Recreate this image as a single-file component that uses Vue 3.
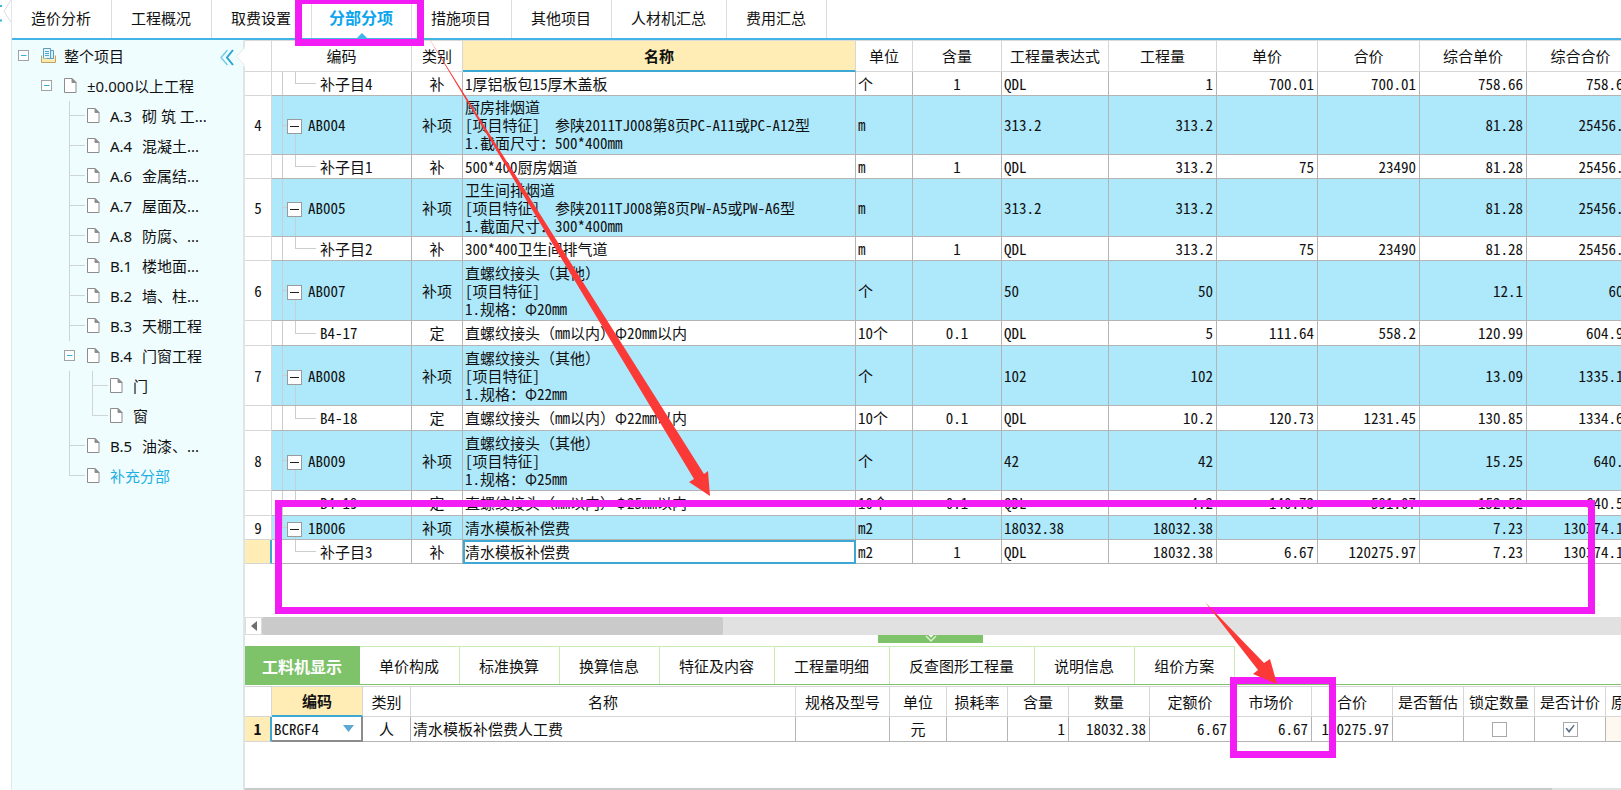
<script setup>
import { ref } from 'vue'

const tabs = ['造价分析', '工程概况', '取费设置', '分部分项', '措施项目', '其他项目', '人材机汇总', '费用汇总']
const activeTab = ref('分部分项')

const tree = [
  { guides: [], toggle: true, icon: 'root', name: '整个项目' },
  { guides: ['none'], toggle: true, icon: 'doc', name: '±0.000以上工程' },
  { guides: ['none', 'none', 'tee'], icon: 'doc', code: 'A.3', name: '砌 筑 工...' },
  { guides: ['none', 'none', 'tee'], icon: 'doc', code: 'A.4', name: '混凝土...' },
  { guides: ['none', 'none', 'tee'], icon: 'doc', code: 'A.6', name: '金属结...' },
  { guides: ['none', 'none', 'tee'], icon: 'doc', code: 'A.7', name: '屋面及...' },
  { guides: ['none', 'none', 'tee'], icon: 'doc', code: 'A.8', name: '防腐、...' },
  { guides: ['none', 'none', 'tee'], icon: 'doc', code: 'B.1', name: '楼地面...' },
  { guides: ['none', 'none', 'tee'], icon: 'doc', code: 'B.2', name: '墙、柱...' },
  { guides: ['none', 'none', 'tee'], icon: 'doc', code: 'B.3', name: '天棚工程' },
  { guides: ['none', 'none'], toggle: true, icon: 'doc', code: 'B.4', name: '门窗工程' },
  { guides: ['none', 'none', 'pipe', 'tee'], icon: 'doc', name: '门' },
  { guides: ['none', 'none', 'pipe', 'elbow'], icon: 'doc', name: '窗' },
  { guides: ['none', 'none', 'tee'], icon: 'doc', code: 'B.5', name: '油漆、...' },
  { guides: ['none', 'none', 'elbow'], icon: 'doc', name: '补充分部', active: true }
]
const guidePath = {
  none: '',
  pipe: 'M5.5 0V30',
  tee: 'M5.5 0V30M5.5 14.5H21',
  elbow: 'M5.5 0V15M5.5 14.5H21'
}

const columns = [
  { label: '编码', cls: 'w-code' },
  { label: '类别', cls: 'w-kind' },
  { label: '名称', cls: 'w-name' },
  { label: '单位', cls: 'w-unit' },
  { label: '含量', cls: 'w-content' },
  { label: '工程量表达式', cls: 'w-expr' },
  { label: '工程量', cls: 'w-qty' },
  { label: '单价', cls: 'w-price' },
  { label: '合价', cls: 'w-total' },
  { label: '综合单价', cls: 'w-expr' },
  { label: '综合合价', cls: 'w-qty' }
]

const rows = [
  { code: '补子目4', kind: '补', name: '1厚铝板包15厚木盖板', unit: '个', content: '1', expr: 'QDL', qty: '1', price: '700.01', total: '700.01', cPrice: '758.66', cTotal: '758.66' },
  { no: '4', code: 'AB004', kind: '补项', name: '厨房排烟道\n[项目特征]  参陕2011TJ008第8页PC-A11或PC-A12型\n1.截面尺寸：500*400mm', unit: 'm', expr: '313.2', qty: '313.2', cPrice: '81.28', cTotal: '25456.9', size: 'h59' },
  { code: '补子目1', kind: '补', name: '500*400厨房烟道', unit: 'm', content: '1', expr: 'QDL', qty: '313.2', price: '75', total: '23490', cPrice: '81.28', cTotal: '25456.9' },
  { no: '5', code: 'AB005', kind: '补项', name: '卫生间排烟道\n[项目特征]  参陕2011TJ008第8页PW-A5或PW-A6型\n1.截面尺寸：300*400mm', unit: 'm', expr: '313.2', qty: '313.2', cPrice: '81.28', cTotal: '25456.9', size: 'h58' },
  { code: '补子目2', kind: '补', name: '300*400卫生间排气道', unit: 'm', content: '1', expr: 'QDL', qty: '313.2', price: '75', total: '23490', cPrice: '81.28', cTotal: '25456.9' },
  { no: '6', code: 'AB007', kind: '补项', name: '直螺纹接头（其他）\n[项目特征]\n1.规格：Φ20mm', unit: '个', expr: '50', qty: '50', cPrice: '12.1', cTotal: '605', size: 'h60' },
  { code: 'B4-17', kind: '定', name: '直螺纹接头（mm以内）Φ20mm以内', unit: '10个', content: '0.1', expr: 'QDL', qty: '5', price: '111.64', total: '558.2', cPrice: '120.99', cTotal: '604.95', size: 'h25' },
  { no: '7', code: 'AB008', kind: '补项', name: '直螺纹接头（其他）\n[项目特征]\n1.规格：Φ22mm', unit: '个', expr: '102', qty: '102', cPrice: '13.09', cTotal: '1335.18', size: 'h60' },
  { code: 'B4-18', kind: '定', name: '直螺纹接头（mm以内）Φ22mm以内', unit: '10个', content: '0.1', expr: 'QDL', qty: '10.2', price: '120.73', total: '1231.45', cPrice: '130.85', cTotal: '1334.67', size: 'h25' },
  { no: '8', code: 'AB009', kind: '补项', name: '直螺纹接头（其他）\n[项目特征]\n1.规格：Φ25mm', unit: '个', expr: '42', qty: '42', cPrice: '15.25', cTotal: '640.5', size: 'h60' },
  { code: 'B4-19', kind: '定', name: '直螺纹接头（mm以内）Φ25mm以内', unit: '10个', content: '0.1', expr: 'QDL', qty: '4.2', price: '140.73', total: '591.07', cPrice: '152.52', cTotal: '640.58', size: 'h25' },
  { no: '9', code: '1B006', kind: '补项', name: '清水模板补偿费', unit: 'm2', expr: '18032.38', qty: '18032.38', cPrice: '7.23', cTotal: '130374.11', last: true },
  { code: '补子目3', kind: '补', name: '清水模板补偿费', unit: 'm2', content: '1', expr: 'QDL', qty: '18032.38', price: '6.67', total: '120275.97', cPrice: '7.23', cTotal: '130374.11', selected: true, last: true }
]

// Splits out the full-width brackets, which keep their full width among half-width digits.
const pieces = (text) => text.split(/([（）])/).filter(Boolean)

const detailTabs = ['工料机显示', '单价构成', '标准换算', '换算信息', '特征及内容', '工程量明细', '反查图形工程量', '说明信息', '组价方案']
const activeDetail = ref('工料机显示')

const detailColumns = [
  { label: '编码', cls: 'd-code' },
  { label: '类别', cls: 'd-kind' },
  { label: '名称', cls: 'd-name' },
  { label: '规格及型号', cls: 'd-spec' },
  { label: '单位', cls: 'd-unit' },
  { label: '损耗率', cls: 'd-loss' },
  { label: '含量', cls: 'd-loss' },
  { label: '数量', cls: 'd-num' },
  { label: '定额价', cls: 'd-num' },
  { label: '市场价', cls: 'd-num' },
  { label: '合价', cls: 'd-num' },
  { label: '是否暂估', cls: 'd-flag' },
  { label: '锁定数量', cls: 'd-flag' },
  { label: '是否计价', cls: 'd-flag' },
  { label: '原始含量', cls: 'd-flag' }
]
const locked = ref(false)
const priced = ref(true)
const itemCode = ref('BCRGF4')
</script>

<template>
  <div class="app">
    <div class="gutter">
      <svg width="11" height="40" viewBox="0 0 11 40" aria-hidden="true">
        <path d="M0 6H2M0 20.500H2" stroke="#35b4dc" stroke-width="2" />
        <path d="M11 0L4 11.500L11 22" fill="none" stroke="#dcdcdc" />
      </svg>
    </div>
    <div class="main">
      <nav class="tabs">
        <button v-for="t in tabs" :key="t" type="button" class="tab" :class="{ active: t === activeTab }" @click="activeTab = t">
          {{ t }}
        </button>
      </nav>

      <div class="workspace">
        <aside class="sidebar">
          <ul class="tree">
            <li v-for="(n, i) in tree" :key="i" class="node" :class="{ current: n.active }">
              <svg v-for="(g, k) in n.guides" :key="k" class="cell" width="23" height="30" viewBox="0 0 23 30" aria-hidden="true">
                <path :d="guidePath[g]" fill="none" stroke="#cfd4d5" />
              </svg>
              <button v-if="n.toggle" type="button" class="cell toggle" :aria-label="'折叠 ' + n.name">
                <svg width="12" height="12" viewBox="0 0 12 12">
                  <rect x="0.500" y="0.500" width="10" height="10" fill="#fbffff" stroke="#a3a3a3" />
                  <path d="M3 5.500H8.500" stroke="#3aaedb" />
                </svg>
              </button>
              <svg v-if="n.icon === 'doc'" class="cell" width="23" height="18" viewBox="0 0 23 18" aria-hidden="true">
                <path d="M0.500 1.500H8L12 5.500V15.500H0.500Z" fill="#fff" stroke="#8d8d8d" />
                <path d="M8 1.500V5.500H12Z" fill="#8d8d8d" stroke="#8d8d8d" />
              </svg>
              <svg v-else class="cell" width="23" height="18" viewBox="0 0 23 18" aria-hidden="true">
                <path d="M0.500 8.500V15.500H14.500V8.500" fill="#fdf1c4" stroke="#b9a46a" />
                <path d="M2.500 1.500H9.500V11.500H2.500Z" fill="#e9f7fd" stroke="#5b9cbd" />
                <path d="M9.500 3.500H12.500V11.500H9.500Z" fill="#d4edf8" stroke="#5b9cbd" />
                <path d="M4 4.500H8M4 6.500H8M4 8.500H8" stroke="#4aa7d2" />
                <path d="M1 11.500H5.500L7 13H14V15H1Z" fill="#fbe9ac" />
              </svg>
              <span v-if="n.code" class="node-code">{{ n.code }}</span>
              <span>{{ n.name }}</span>
            </li>
          </ul>
          <button type="button" class="collapse" aria-label="收起">
            <svg width="26" height="22" viewBox="0 0 26 22">
              <path d="M8.500 3L2 10.500L8.500 18" fill="none" stroke="#6cc8e6" stroke-width="1.300" />
              <path d="M14 3L8 10.500L14 18" fill="none" stroke="#2ba5cf" stroke-width="2" />
              <path d="M26 0V20L17 10Z" fill="#fff" />
              <path d="M25.500 1L17.500 9.500L25.500 18" fill="none" stroke="#e3e8e9" />
            </svg>
          </button>
        </aside>

        <section class="content">
          <div class="upper">
            <table class="grid bill">
              <thead>
                <tr>
                  <th class="w-no"></th>
                  <th v-for="c in columns" :key="c.label" :class="[c.cls, { picked: c.label === '名称' }]">{{ c.label }}</th>
                </tr>
              </thead>
              <tbody>
                <tr v-for="(r, i) in rows" :key="i" :class="[r.size || 'h24', { parent: r.no, chosen: r.selected }]">
                  <td class="no">{{ r.no }}</td>
                  <td class="code" :class="[r.no ? 'branch' : 'leaf', { last: r.last }]">
                    <button v-if="r.no" type="button" class="fold" :aria-label="'折叠 ' + r.code"></button>{{ r.code }}
                  </td>
                  <td class="mid">{{ r.kind }}</td>
                  <td class="name"><span v-for="(p, k) in pieces(r.name)" :key="k" :class="{ wide: p === '（' || p === '）' }">{{ p }}</span></td>
                  <td>{{ r.unit }}</td>
                  <td class="mid">{{ r.content }}</td>
                  <td>{{ r.expr }}</td>
                  <td class="num">{{ r.qty }}</td>
                  <td class="num">{{ r.price }}</td>
                  <td class="num">{{ r.total }}</td>
                  <td class="num">{{ r.cPrice }}</td>
                  <td class="num">{{ r.cTotal }}</td>
                </tr>
              </tbody>
            </table>
          </div>

          <div class="hscroll">
            <button type="button" class="hscroll-btn" aria-label="向左滚动">
              <svg width="6" height="10" viewBox="0 0 6 10"><path d="M6 0V10L0 5Z" fill="#6e6e6e" /></svg>
            </button>
            <div class="hscroll-thumb"></div>
          </div>

          <div class="splitter">
            <button type="button" class="handle" aria-label="收起明细">
              <svg width="12" height="8" viewBox="0 0 12 8">
                <path d="M3.500 0H8.500L6 2.500Z" fill="#fff" />
                <path d="M1 1L6 6L11 1" fill="none" stroke="#d9efd0" stroke-width="1.500" />
              </svg>
            </button>
          </div>

          <div class="lower">
            <nav class="dtabs">
              <button v-for="t in detailTabs" :key="t" type="button" class="dtab" :class="{ active: t === activeDetail }" @click="activeDetail = t">
                {{ t }}
              </button>
            </nav>
            <div class="detail">
              <table class="grid items">
                <thead>
                  <tr>
                    <th class="w-no"></th>
                    <th v-for="c in detailColumns" :key="c.label" :class="[c.cls, { picked: c.label === '编码' }]">{{ c.label }}</th>
                  </tr>
                </thead>
                <tbody>
                  <tr class="h25 chosen">
                    <td class="no">1</td>
                    <td class="editor">
                      <div class="combo">
                        <select v-model="itemCode" aria-label="编码"><option>BCRGF4</option></select>
                        <svg width="11" height="7" viewBox="0 0 11 7" aria-hidden="true"><path d="M0 0H11L5.500 7Z" fill="#5fa8d3" /></svg>
                      </div>
                    </td>
                    <td class="mid">人</td>
                    <td>清水模板补偿费人工费</td>
                    <td></td>
                    <td class="mid">元</td>
                    <td></td>
                    <td class="num">1</td>
                    <td class="num">18032.38</td>
                    <td class="num">6.67</td>
                    <td class="num">6.67</td>
                    <td class="num">120275.97</td>
                    <td></td>
                    <td class="mid"><input v-model="locked" type="checkbox" aria-label="锁定数量" /></td>
                    <td class="mid"><input v-model="priced" type="checkbox" aria-label="是否计价" /></td>
                    <td class="tint"></td>
                  </tr>
                </tbody>
              </table>
            </div>
            <div class="foot"><div class="foot-thumb"></div></div>
          </div>
        </section>
      </div>
    </div>

    <svg class="marks" width="1621" height="790" viewBox="0 0 1621 790" aria-hidden="true">
      <g fill="none" stroke="#f41cf4" stroke-width="7">
        <rect x="298.500" y="0.500" width="122" height="42" />
        <rect x="278.500" y="503.500" width="1313" height="107" />
        <rect x="1233.500" y="680.500" width="99" height="74" />
      </g>
      <g fill="#fb3a38">
        <path d="M427 35L704 474L708 471L710 496L689 482L694 479Z" />
        <path d="M1205 602L1264 663L1270 659L1277 684L1253 674L1258 670Z" />
      </g>
    </svg>
  </div>
</template>

<style>
html,
body {
  margin: 0;
  background: #fff;
}
</style>

<style scoped>
.app {
  position: relative;
  display: flex;
  min-height: 100vh;
  overflow: hidden;
  color: #111;
  font: 15px/18px "Noto Sans CJK SC", sans-serif;
  font-feature-settings: "hwid";
}
.app *,
.app *::before,
.app *::after {
  box-sizing: border-box;
}
button,
select {
  margin: 0;
  padding: 0;
  border: 0;
  background: none;
  color: inherit;
  font: inherit;
  font-feature-settings: inherit;
}
svg {
  display: block;
}
.wide {
  font-feature-settings: normal;
}
.gutter {
  flex: 0 0 12px;
  border-right: 1px solid #e2e6e7;
}
.main {
  flex: 1;
  min-width: 0;
  display: flex;
  flex-direction: column;
}

.tabs {
  display: flex;
  height: 40px;
  border-bottom: 2px solid #41b6e6;
}
.tab {
  padding: 0 20px 2px 19px;
  border-right: 1px solid #dcdcdc;
  white-space: nowrap;
}
.tab.active {
  position: relative;
  padding: 0 18px 4px 17px;
  color: #0aa5ee;
  font-size: 16px;
  font-weight: 700;
}
.tab.active::after {
  content: "";
  position: absolute;
  left: 50%;
  bottom: 0;
  margin-left: -5px;
  border: 5px solid transparent;
  border-top-width: 0;
  border-bottom-color: #41b6e6;
}

.workspace {
  flex: 1;
  display: flex;
  min-height: 0;
}
.sidebar {
  position: relative;
  flex: 0 0 233px;
  border-right: 2px solid #dfe5e6;
  background: #f0fdff;
}
.tree {
  margin: 0;
  padding: 1px 0 0 6px;
  list-style: none;
  font-family: "Noto Sans", "Noto Sans CJK SC", sans-serif;
  font-feature-settings: normal;
}
.node {
  display: flex;
  align-items: center;
  height: 30px;
  white-space: nowrap;
}
.node.current {
  color: #1fb0e0;
}
.cell {
  flex: 0 0 23px;
}
.node-code {
  flex: 0 0 32px;
}
.collapse {
  position: absolute;
  top: 7px;
  right: -2px;
}

.content {
  flex: 1;
  min-width: 0;
  display: flex;
  flex-direction: column;
}
.upper {
  flex: 1;
  overflow: hidden;
  border-top: 1px solid #d9d9d9;
}
.grid {
  border-collapse: separate;
  border-spacing: 0;
  table-layout: fixed;
}
.bill {
  width: calc(100% + 14px);
}
.items {
  width: calc(100% + 56px);
}
.grid th {
  height: 31px;
  padding: 0;
  border-right: 1px solid #d6d6d6;
  border-bottom: 1px solid #d6d6d6;
  font-weight: 400;
  white-space: nowrap;
  overflow: hidden;
}
.grid th.picked {
  border-bottom: 2px solid #3da8d4;
  background: #ffedb5;
  font-weight: 700;
}
.grid td {
  padding: 0 3px 0 2px;
  border-right: 1px solid #b4b4b4;
  border-bottom: 1px solid #b4b4b4;
  white-space: pre;
  overflow: hidden;
}
.h24 td { height: 24px; }
.h25 td { height: 25px; }
.h58 td { height: 58px; }
.h59 td { height: 59px; }
.h60 td { height: 60px; }
.parent td {
  background-color: #ade8fb;
}
.grid td.no {
  padding: 0;
  border-color: #d6d6d6;
  background-color: #fff;
  text-align: center;
}
.grid .chosen td.no {
  border-right: 2px solid #3da8d4;
  background-color: #ffedb5;
  font-weight: 700;
}
.grid td.mid {
  padding: 0;
  text-align: center;
}
.grid td.num {
  text-align: right;
}
.bill .chosen td.name {
  padding: 0;
  border: 2px solid #3da8d4;
}
.grid td.code {
  white-space: nowrap;
  background-repeat: no-repeat;
  background-image: linear-gradient(#c9ced0, #c9ced0), linear-gradient(#c9ced0, #c9ced0), linear-gradient(#c9ced0, #c9ced0);
}
.grid td.branch {
  padding-left: 15px;
  background-size: 1px 100%, 1px 50%, 5px 1px;
  background-position: 10px 0, 23px 100%, 10px 50%;
}
.grid td.leaf {
  padding-left: 48px;
  background-size: 1px 100%, 1px 50%, 21px 1px;
  background-position: 10px 0, 23px 0, 23px 50%;
}
.grid td.branch.last {
  background-size: 1px 50%, 1px 50%, 5px 1px;
}
.grid td.leaf.last {
  background-size: 0 0, 1px 50%, 21px 1px;
}
.fold {
  display: inline-block;
  width: 15px;
  height: 15px;
  margin-right: 6px;
  border: 1px solid #9b9b9b;
  vertical-align: -2px;
  background: linear-gradient(#222, #222) center / 9px 1px no-repeat #fff;
}
.w-no { width: 27px; }
.w-code { width: 140px; }
.w-kind { width: 51px; }
.w-unit { width: 57px; }
.w-content { width: 89px; }
.w-expr { width: 107px; }
.w-qty { width: 108px; }
.w-price { width: 101px; }
.w-total { width: 102px; }

.hscroll {
  display: flex;
  height: 18px;
  background: #e1e1e1;
}
.hscroll-btn {
  display: flex;
  align-items: center;
  justify-content: center;
  width: 17px;
  border: 1px solid #dcdcdc;
  background: #fff;
}
.hscroll-thumb {
  width: 33.5%;
  border-radius: 2px;
  background: #cacaca;
}
.splitter {
  display: flex;
  justify-content: center;
  height: 11px;
  padding-right: 5px;
}
.handle {
  display: flex;
  justify-content: center;
  width: 105px;
  height: 8px;
  background: #7ec26a;
}

.dtabs {
  display: flex;
  height: 39px;
  border-bottom: 1px solid #7ec26a;
}
.dtab {
  padding: 0 20px 0 19px;
  border-top: 1px solid #c8ecb4;
  border-right: 1px solid #c8ecb4;
  white-space: nowrap;
}
.dtab.active {
  padding: 0 17px;
  border-color: #7ec26a;
  background: #7ec26a;
  color: #fff;
  font-size: 16px;
  font-weight: 700;
}
.detail {
  min-height: 103px;
  padding-top: 1px;
  overflow: hidden;
}
.items th {
  border-top: 1px solid #d6d6d6;
}
.d-code { width: 91px; }
.d-kind { width: 48px; }
.d-spec { width: 94px; }
.d-unit { width: 57px; }
.d-loss { width: 61px; }
.d-num { width: 81px; }
.d-flag { width: 71px; }
.grid td.editor {
  padding: 0;
  border-right: 2px solid #8c8c8c;
  border-bottom: 2px solid #8c8c8c;
}
.combo {
  display: flex;
  align-items: center;
  padding-right: 7px;
}
.combo select {
  flex: 1;
  min-width: 0;
  padding-left: 2px;
  appearance: none;
}
.grid td.tint {
  background: #fff8f0;
}
input[type="checkbox"] {
  display: block;
  width: 15px;
  height: 15px;
  margin: 0 auto;
  border: 1px solid #a8a8a8;
  background: #fff;
  appearance: none;
}
input[type="checkbox"]:checked::after {
  content: "";
  display: block;
  width: 13px;
  height: 13px;
  background: #5c6f86;
  clip-path: polygon(15% 47%, 26% 40%, 42% 60%, 78% 18%, 86% 24%, 43% 80%);
}
.foot {
  height: 2px;
  background: #e1e1e1;
}
.foot-thumb {
  width: 95%;
  height: 2px;
  background: #cacaca;
}

.marks {
  position: absolute;
  top: 0;
  left: 0;
  pointer-events: none;
}
</style>
